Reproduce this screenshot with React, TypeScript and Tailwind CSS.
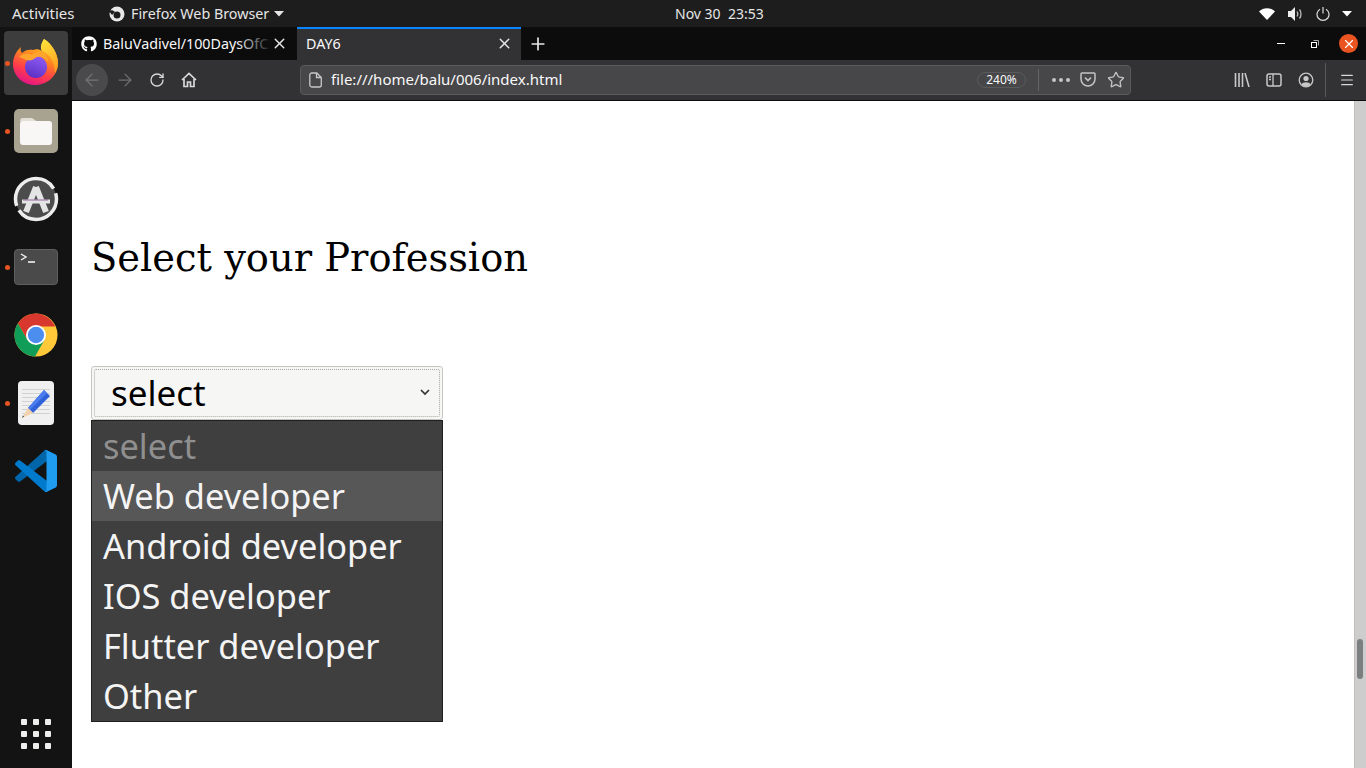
import { FaGithub } from "react-icons/fa";
import { ArrowLeft, ArrowRight, RotateCw, X, Plus, Star, Menu } from "lucide-react";

const uiFont = "font-['Noto_Sans','Open_Sans',sans-serif]";

const Caret = ({ className }: { className: string }) => (
  <svg width="10" height="6" viewBox="0 0 10 6" className={className}>
    <path d="M0 0h10L5 5.5z" fill="currentColor" />
  </svg>
);

const FirefoxIcon = () => (
  <svg width="56" height="56" viewBox="0 1 56 56">
    <defs>
      <linearGradient id="ffBody" x1="0.75" y1="0" x2="0.35" y2="1">
        <stop offset="0" stopColor="#ffd52e" />
        <stop offset="0.4" stopColor="#ff8a1f" />
        <stop offset="0.72" stopColor="#ff3c4a" />
        <stop offset="1" stopColor="#e31587" />
      </linearGradient>
      <linearGradient id="ffFlame" x1="0.4" y1="0" x2="0.7" y2="1">
        <stop offset="0" stopColor="#ffe03a" />
        <stop offset="1" stopColor="#ff9a1f" />
      </linearGradient>
      <linearGradient id="ffCore" x1="0.7" y1="0" x2="0.3" y2="1">
        <stop offset="0" stopColor="#8f5cf5" />
        <stop offset="1" stopColor="#5a2fc2" />
      </linearGradient>
    </defs>
    <path
      d="M36 5C44 10 50 20 50 29 50 41 40 51 27 51 14 51 5 41 5 30 5 24 8 17 13 13 12 16 13 18 14 19 17 16 21 15 25 16 28 15 31 15 34 17 32 14 33 10 36 5z"
      fill="url(#ffBody)"
    />
    <path d="M36 5C44 10 50 20 50 29 50 33 49 36 47 39 47 28 42 20 34 17 32 14 33 10 36 5z" fill="url(#ffFlame)" />
    <circle cx="28" cy="33" r="11" fill="url(#ffCore)" />
    <path
      d="M11 23C15 19 20 19 24 21 27 17 33 17 37 20 39 22 40 25 40 28 37 24 33 22 29 23 27 24 26 25 24 26 21 27 18 26 16 25 14 24 12 23 11 23z"
      fill="#ffa52e"
    />
  </svg>
);

const FilesIcon = () => (
  <div className="flex h-[44px] w-[44px] items-center justify-center rounded-[5px] bg-[#a8a291]">
    <svg width="32" height="28" viewBox="0 0 32 28">
      <path d="M0 4a3 3 0 0 1 3-3h9l5 3.500H0z" fill="#e2dfd6" />
      <rect x="0" y="4" width="32" height="24" rx="3" fill="#f8f7f5" />
    </svg>
  </div>
);

const SoftwareIcon = () => (
  <svg width="46" height="46" viewBox="0 0 46 46">
    <circle cx="23" cy="23" r="20.5" fill="#4c4c4c" stroke="#ededed" strokeWidth="3.5" strokeDasharray="52 5 60 5" />
    <path d="M23 11 13 36M23 11l10 25" stroke="#e4e4e4" strokeWidth="6" fill="none" />
    <path d="M9 25.500h28" stroke="#e4e4e4" strokeWidth="4" />
    <path d="M10 24h25" stroke="#7d4a8c" strokeWidth="0.800" />
  </svg>
);

const TerminalIcon = () => (
  <div className="relative h-[36px] w-[44px] rounded-[4px] border border-[#5f5f5f] bg-[#4a4a4a]">
    <svg width="20" height="14" viewBox="0 0 20 14" className="ml-[5px] mt-[3px]">
      <path d="M1 1l5 3-5 3" stroke="#f2f2f2" strokeWidth="1.4" fill="none" />
      <path d="M8 9h7" stroke="#f2f2f2" strokeWidth="1.6" />
    </svg>
  </div>
);

const ChromeIcon = () => (
  <svg width="44" height="44" viewBox="0 0 46 46">
    <circle cx="23" cy="23" r="22.5" fill="#ffc93a" />
    <path d="M23 .5A22.5 22.5 0 0 0 4 11l10 17L23 14h20A22.5 22.5 0 0 0 23 .5z" fill="#d8382e" />
    <path d="M4 11A22.5 22.5 0 0 0 22 45.5L32 28H14z" fill="#0f9d58" />
    <circle cx="23" cy="23" r="10.5" fill="#fff" />
    <circle cx="23" cy="23" r="8.5" fill="#4b8ef0" />
  </svg>
);

const EditorIcon = () => (
  <div className="relative h-[44px] w-[36px] rounded-[4px] bg-[#f0f0f0]">
    <svg width="36" height="44" viewBox="0 0 36 44" className="absolute left-0 top-0">
      <path d="M4 8.500h28M4 12.500h28M4 16.500h28M4 20.500h28M4 24.500h28M4 28.500h28M4 32.500h28" stroke="#d2d2d2" strokeWidth="1" />
      <path d="M26 9l6 6-17 17-5-5z" fill="#2f62d9" />
      <path d="M26 9l3 3-17 17-2-2z" fill="#4a7df0" />
      <path d="M10 27l5 5-11 5z" fill="#f2d2ac" />
      <path d="M6 35.500l-2 1.500 1-2.500z" fill="#333" />
    </svg>
  </div>
);

const VsCodeIcon = () => (
  <svg width="42" height="42" viewBox="0 0 100 100">
    <path
      d="M96.46 10.8 75.86.9C73.47-.24 70.62.24 68.75 2.12L1.34 63.56c-1.81 1.65-1.81 4.51.01 6.16l5.51 5.01c1.49 1.35 3.72 1.45 5.32.23L93.42 13.1c2.72-2.06 6.63-.12 6.63 3.29v-.24c0-2.4-1.37-4.58-3.59-5.35z"
      fill="#0065a9"
    />
    <path
      d="M96.46 89.2 75.86 99.1c-2.39 1.15-5.24.66-7.11-1.22L1.34 36.44c-1.81-1.65-1.81-4.51.01-6.16l5.51-5.01c1.49-1.35 3.72-1.45 5.32-.23L93.42 86.9c2.72 2.06 6.63.12 6.63-3.29v.24c0 2.4-1.37 4.58-3.59 5.35z"
      fill="#007acc"
    />
    <path
      d="M75.86 99.12c-2.39 1.15-5.24.66-7.11-1.22 2.31 2.31 6.25.68 6.25-2.59V4.69c0-3.27-3.94-4.9-6.25-2.59 1.87-1.87 4.72-2.36 7.11-1.22l20.6 9.9c2.17 1.04 3.54 3.23 3.54 5.64v66.97c0 2.41-1.37 4.6-3.54 5.64z"
      fill="#1f9cf0"
    />
  </svg>
);

const DockItem = ({ dot, active, children }: { dot?: boolean; active?: boolean; children: React.ReactNode }) => (
  <div className="relative flex h-[68px] w-full items-center justify-center">
    {active && <div className="absolute left-[4px] top-[2px] h-[64px] w-[64px] rounded-[4px] bg-[#3d3d3d]" />}
    {dot && <div className="absolute left-[5px] top-[32px] h-[5px] w-[5px] rounded-full bg-[#e95420]" />}
    <div className="relative flex">{children}</div>
  </div>
);

const options = ["Web developer", "Android developer", "IOS developer", "Flutter developer", "Other"];

export default function App() {
  return (
    <div className={`flex h-[768px] w-[1366px] flex-col overflow-hidden bg-white ${uiFont}`}>
      {/* gnome top bar */}
      <div className="relative flex h-[27px] shrink-0 items-center bg-[#1d1d1d] text-[14.3px] text-[#e6e6e6]">
        <span className="ml-[12px] w-[97px] text-[15px]">Activities</span>
        <svg width="16" height="16" viewBox="0 0 16 16">
          <circle cx="8" cy="8" r="7.500" fill="#e8e8e8" />
          <circle cx="8" cy="9" r="3.500" fill="#1d1d1d" />
          <path d="M0 5c2-1 4-1 6 1L3 9z" fill="#1d1d1d" />
        </svg>
        <span className="ml-[6px]">Firefox Web Browser</span>
        <Caret className="ml-[5px] text-[#e6e6e6]" />
        <span className="absolute left-[675px] top-[3px] text-[14px]">Nov 30&nbsp;&nbsp;23:53</span>
        <div className="ml-auto mr-[14px] flex items-center text-white">
          <svg width="16" height="12" viewBox="0 0 16 12" className="mr-[13px]">
            <path d="M0 3.500C4-1 12-1 16 3.500L8 12z" fill="#fff" />
          </svg>
          <svg width="16" height="14" viewBox="0 0 16 14" className="mr-[12px]">
            <path d="M0 4h3l4-4v14l-4-4H0z" fill="#eee" />
            <path d="M9 4.500c1 1.500 1 3.500 0 5M11.500 2.500c2 2.500 2 6.500 0 9" stroke="#bbb" fill="none" strokeWidth="1.300" />
          </svg>
          <svg width="14" height="14" viewBox="0 0 14 14" className="mr-[12px]">
            <path d="M4 2.200a6 6 0 1 0 6 0M7 0v6.500" stroke="#ddd" fill="none" strokeWidth="1.200" />
          </svg>
          <Caret className="text-white" />
        </div>
      </div>

      <div className="flex min-h-0 flex-1">
        {/* ubuntu dock */}
        <div className="flex w-[72px] shrink-0 flex-col bg-[#131313] pt-[2px]">
          <DockItem dot active><FirefoxIcon /></DockItem>
          <DockItem dot><FilesIcon /></DockItem>
          <DockItem><SoftwareIcon /></DockItem>
          <DockItem dot><TerminalIcon /></DockItem>
          <DockItem><ChromeIcon /></DockItem>
          <DockItem dot><EditorIcon /></DockItem>
          <DockItem><VsCodeIcon /></DockItem>
          <div className="mt-auto flex h-[68px] items-center justify-center">
            <div className="grid grid-cols-3 gap-[6px]">
              {Array.from({ length: 9 }).map((_, i) => (
                <div key={i} className="h-[6px] w-[6px] rounded-[1px] bg-[#eeeeec]" />
              ))}
            </div>
          </div>
        </div>

        <div className="flex min-w-0 flex-1 flex-col">
          {/* tabs */}
          <div className="flex h-[33px] shrink-0 items-stretch bg-[#0c0c0d] text-[14.3px] text-[#f9f9fa]">
            <div className="relative flex w-[225px] items-center pl-[9px]">
              <FaGithub size={16} className="text-white" />
              <span className="ml-[6px] whitespace-nowrap">BaluVadivel/100DaysOfC</span>
              <div className="absolute left-[165px] top-0 h-full w-[35px] bg-gradient-to-r from-transparent to-[#0c0c0d]" />
              <X size={17} className="absolute left-[199px] top-[8px] text-[#e8e8e8]" />
            </div>
            <div className="relative flex w-[224px] items-center border-t-2 border-[#0a84ff] bg-[#323234] pb-[2px] pl-[9px]">
              <span>DAY6</span>
              <X size={17} className="absolute left-[199px] top-[6px] text-[#e8e8e8]" />
            </div>
            <div className="ml-[7px] flex items-center">
              <Plus size={20} className="text-[#e8e8e8]" />
            </div>
            <div className="ml-auto flex items-center">
              <div className="mr-[26px] h-[1px] w-[8px] bg-white" />
              <svg width="8" height="8" viewBox="0 0 8 8" className="mr-[20px]">
                <rect x="0.500" y="2.500" width="5" height="5" fill="none" stroke="#fff" />
                <path d="M2.500 .5h5v5" fill="none" stroke="#aaa" />
              </svg>
              <div className="mr-[8px] flex h-[19px] w-[19px] items-center justify-center rounded-full bg-[#e95420]">
                <X size={14} className="text-white" />
              </div>
            </div>
          </div>

          {/* toolbar */}
          <div className="flex h-[41px] shrink-0 items-center border-b border-[#0c0c0d] bg-[#323234] pb-[1px]">
            <div className="ml-[4px] flex h-[32px] w-[32px] items-center justify-center rounded-full bg-[#4a4a4c]">
              <ArrowLeft size={20} strokeWidth={1.500} className="text-[#757576]" />
            </div>
            <ArrowRight size={20} strokeWidth={1.500} className="ml-[7px] text-[#707071]" />
            <RotateCw size={16} strokeWidth={2} className="ml-[14px] text-[#d8d8d8]" />
            <svg width="16" height="16" viewBox="0 0 16 16" className="ml-[16px]">
              <path d="M1 8l7-6.500L15 8M3 7v7.500h3.500V10h3v4.500H13V7" fill="none" stroke="#d8d8d8" strokeWidth="1.700" />
            </svg>
            <div className="ml-[103px] flex h-[30px] w-[831px] items-center rounded-[4px] border border-[#5a5a5c] bg-[#474749] text-[15px] text-[#f9f9fa]">
              <svg width="14" height="16" viewBox="0 0 14 16" className="ml-[8px]">
                <path d="M2.800 1h5l4.500 4.500V13a2 2 0 0 1-2 2H2.800a2 2 0 0 1-2-2V3a2 2 0 0 1 2-2zM7.500 1v4.500h4.800" fill="none" stroke="#c8c8c8" strokeWidth="1.300" />
              </svg>
              <span className="ml-[8px]">file:///home/balu/006/index.html</span>
              <div className="ml-auto flex h-[16px] w-[49px] items-center justify-center rounded-full border border-[#5a5a5c] text-[12px]">240%</div>
              <div className="ml-[12px] h-[22px] w-[1px] bg-[#666668]" />
              <div className="ml-[13px] flex gap-[3px]">
                <div className="h-[4px] w-[4px] rounded-full bg-[#c4c4c4]" />
                <div className="h-[4px] w-[4px] rounded-full bg-[#c4c4c4]" />
                <div className="h-[4px] w-[4px] rounded-full bg-[#c4c4c4]" />
              </div>
              <svg width="16" height="15" viewBox="0 0 16 15" className="ml-[10px]">
                <path d="M2 1h12a1 1 0 0 1 1 1v5a7 7 0 0 1-14 0V2a1 1 0 0 1 1-1z" fill="none" stroke="#c4c4c4" strokeWidth="1.500" />
                <path d="M5 5.500l3 3 3-3" fill="none" stroke="#c4c4c4" strokeWidth="1.600" />
              </svg>
              <Star size={18} strokeWidth={1.800} className="ml-[11px] mr-[5px] text-[#c4c4c4]" />
            </div>
            <svg width="16" height="14" viewBox="0 0 16 14" className="ml-[103px]">
              <path d="M1.500 0v14M5 0v14M8.500 0v14M11 0l4 14" stroke="#c8c8c8" strokeWidth="1.600" fill="none" />
            </svg>
            <svg width="16" height="14" viewBox="0 0 16 14" className="ml-[16px]">
              <rect x="1" y="1" width="14" height="12" rx="2" fill="none" stroke="#c8c8c8" strokeWidth="1.500" />
              <path d="M7 1v12M3 4h2M3 6.500h2" stroke="#c8c8c8" strokeWidth="1.300" />
            </svg>
            <svg width="16" height="16" viewBox="0 0 16 16" className="ml-[16px]">
              <circle cx="8" cy="8" r="6.800" fill="none" stroke="#c8c8c8" strokeWidth="1.300" />
              <circle cx="8" cy="6.500" r="2.600" fill="#c8c8c8" />
              <path d="M3.500 12.500c1-3 8-3 9 0-2 2-7 2-9 0z" fill="#c8c8c8" />
            </svg>
            <div className="ml-[11px] h-[34px] w-[1px] bg-[#5a5a5c]" />
            <Menu size={16} strokeWidth={1.800} className="ml-[13px] text-[#d8d8d8]" />
          </div>

          {/* page */}
          <div className="flex min-h-0 flex-1">
            <div className="min-w-0 flex-1 pl-[19px] pt-[133px]">
              <h1 className="font-['DejaVu_Serif',serif] text-[38.4px] leading-[48px] text-black">Select your Profession</h1>
              <div className="mt-[84px] w-[352px]">
                <div className="flex h-[54px] items-center justify-between rounded-[3px] border border-[#c8c6c2] bg-[#f6f6f4] p-[2px]">
                  <div className="flex h-full w-full items-center justify-between rounded-[2px] border border-dotted border-[#a8a8a8] pb-[2px] pl-[16px] pr-[9px] text-[35px] text-black">
                    <span className="leading-none">select</span>
                    <svg width="10" height="7" viewBox="0 0 10 7">
                      <path d="M1 1l4 4 4-4" fill="none" stroke="#333" strokeWidth="1.700" />
                    </svg>
                  </div>
                </div>
                <div className="flex flex-col border border-[#1f1f1f] bg-[#3f3f3f] text-[34.4px] text-[#f4f4f4]">
                  <div className="flex h-[50px] items-center pl-[11px] text-[#8f8f8f]">select</div>
                  {options.map((option, i) => (
                    <div key={option} className={`flex h-[50px] items-center pl-[11px] ${i === 0 ? "bg-[#575757]" : ""}`}>
                      {option}
                    </div>
                  ))}
                </div>
              </div>
            </div>
            {/* scrollbar */}
            <div className="relative w-[12px] shrink-0 border-l border-[#c4bdb8] bg-[#cdcdcd]">
              <div className="absolute left-[2px] top-[538px] h-[40px] w-[6px] rounded-full bg-[#7b7f7f]" />
            </div>
          </div>
        </div>
      </div>
    </div>
  );
}
